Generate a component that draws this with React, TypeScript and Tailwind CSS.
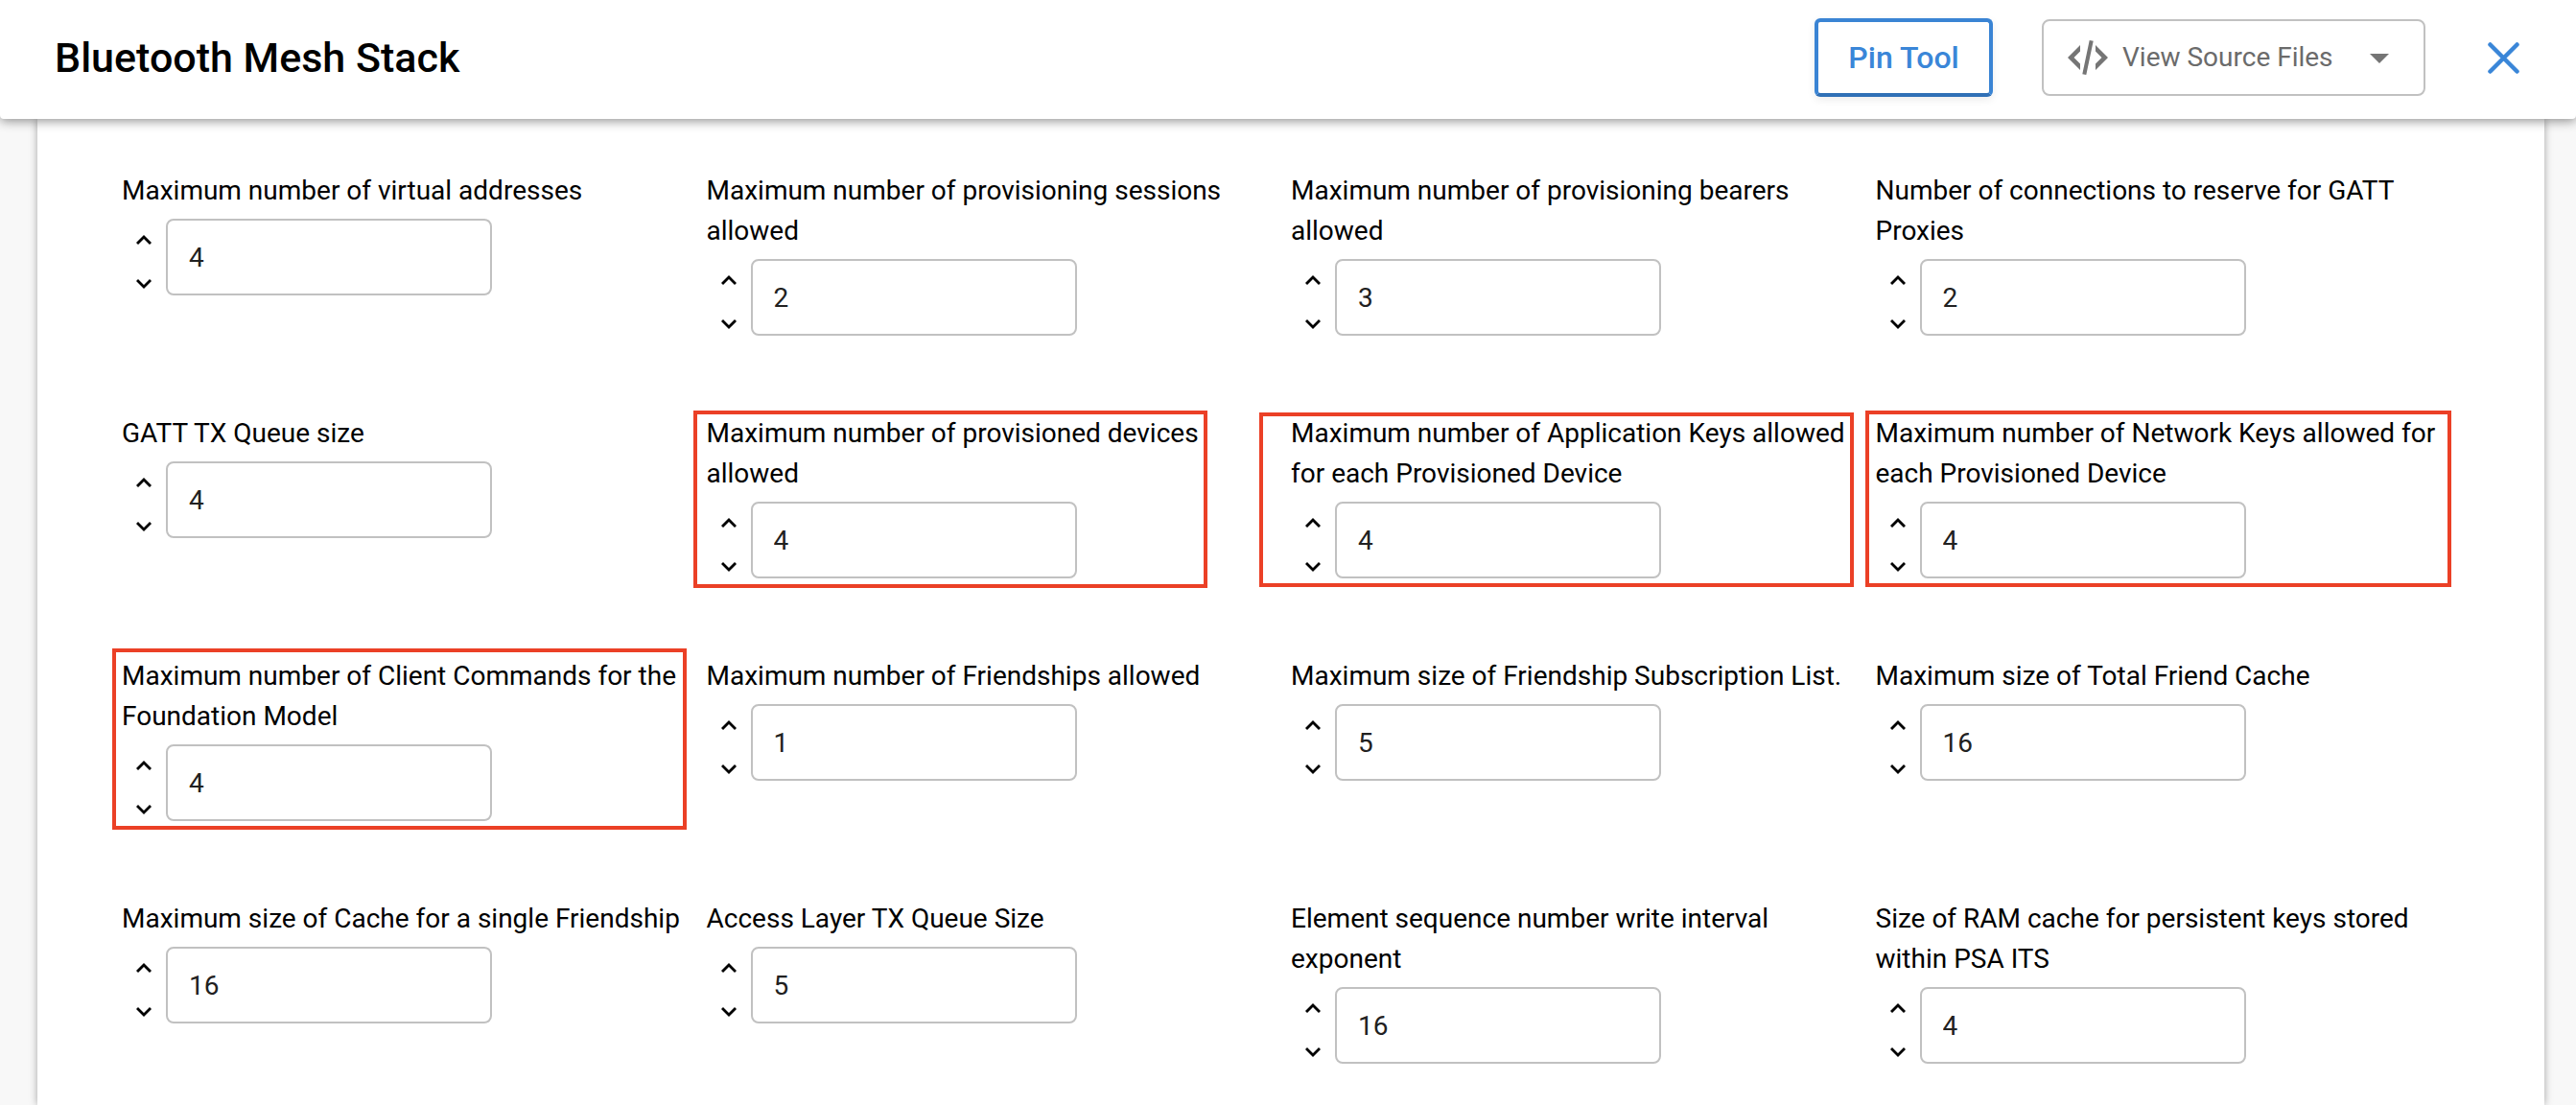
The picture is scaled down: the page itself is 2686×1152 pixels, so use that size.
import { useState } from "react";

type Field = { label: string; value: number; mark?: string };

const fields: Field[] = [
  { label: "Maximum number of virtual addresses", value: 4 },
  { label: "Maximum number of provisioning sessions allowed", value: 2 },
  { label: "Maximum number of provisioning bearers allowed", value: 3 },
  { label: "Number of connections to reserve for GATT Proxies", value: 2 },
  { label: "GATT TX Queue size", value: 4 },
  {
    label: "Maximum number of provisioned devices allowed",
    value: 4,
    mark: "-left-[14px] -top-[3px] -bottom-[10px] right-[87px]",
  },
  {
    label: "Maximum number of Application Keys allowed for each Provisioned Device",
    value: 4,
    mark: "-left-[33px] -top-[1px] -bottom-[9px] right-[23px]",
  },
  {
    label: "Maximum number of Network Keys allowed for each Provisioned Device",
    value: 4,
    mark: "-left-[11px] -top-[3px] -bottom-[9px] right-[9px]",
  },
  {
    label: "Maximum number of Client Commands for the Foundation Model",
    value: 4,
    mark: "-left-[10px] -top-[8px] -bottom-[9px] right-[21px]",
  },
  { label: "Maximum number of Friendships allowed", value: 1 },
  { label: "Maximum size of Friendship Subscription List.", value: 5 },
  { label: "Maximum size of Total Friend Cache", value: 16 },
  { label: "Maximum size of Cache for a single Friendship", value: 16 },
  { label: "Access Layer TX Queue Size", value: 5 },
  { label: "Element sequence number write interval exponent", value: 16 },
  { label: "Size of RAM cache for persistent keys stored within PSA ITS", value: 4 },
];

function Chevron({ down = false }: { down?: boolean }) {
  return (
    <svg viewBox="0 0 16 10" className="h-[10px] w-4" fill="currentColor" aria-hidden="true">
      <path d={down ? "M2 0 8 6 14 0 16 2 8 10 0 2Z" : "M2 10 8 4 14 10 16 8 8 0 0 8Z"} />
    </svg>
  );
}

function NumberField({ id, field }: { id: string; field: Field }) {
  const [value, setValue] = useState(String(field.value));
  const step = (by: number) => setValue(String(Number(value) + by));
  return (
    <div className="relative">
      <label htmlFor={id} className="block text-[28px] leading-[42px] text-black">
        {field.label}
      </label>
      <div className="mt-2 flex">
        <div className="flex w-[46px] flex-col items-center justify-between pt-[10px]">
          <button type="button" aria-label="Increase" onClick={() => step(1)} className="flex size-6 items-center justify-center">
            <Chevron />
          </button>
          <button type="button" aria-label="Decrease" onClick={() => step(-1)} className="flex size-6 items-center justify-center">
            <Chevron down />
          </button>
        </div>
        <input
          id={id}
          value={value}
          onChange={(e) => setValue(e.target.value)}
          className="h-20 w-[340px] rounded-lg border-2 border-[#c1c1c1] bg-white px-[22px] text-[28px] text-[#212121] outline-none"
        />
      </div>
      {field.mark && (
        <div className={`pointer-events-none absolute border-4 border-[#eb4026] ${field.mark}`} />
      )}
    </div>
  );
}

export default function App() {
  return (
    <div className="flex min-h-screen flex-col bg-[#f8f8f8] font-['Roboto',sans-serif]">
      <header className="relative z-10 flex h-[124px] items-center rounded-b-sm bg-white pr-[59px] pb-1 pl-[57px] shadow-[0_2px_12px_rgba(0,0,0,0.45)]">
        <h1 className="text-[43px] font-medium text-black">Bluetooth Mesh Stack</h1>
        <button
          type="button"
          className="ml-auto h-[82px] w-[186px] rounded-md border-4 border-[#3a84d4] border-b-[#3070b6] bg-white text-[32px] font-medium text-[#3a86d8] shadow-[0_3px_8px_rgba(0,0,0,0.08)]"
        >
          Pin Tool
        </button>
        <div className="relative ml-[51px]">
          <svg
            viewBox="0 0 42 36"
            className="pointer-events-none absolute top-[22px] left-[27px] h-9 w-[42px]"
            fill="#757575"
            aria-hidden="true"
          >
            <path d="M13 5V11.500L6.500 18 13 24.500V31L0 18ZM29 5V11.500L35.500 18 29 24.500V31L42 18ZM22.700 0 26.700 0.700 19.300 36 15.300 35.300Z" />
          </svg>
          <select
            aria-label="View Source Files"
            className="h-20 w-[400px] appearance-none rounded-lg border-2 border-[#c1c1c1] bg-white pl-[82px] text-[28px] text-[#6b6b6b] outline-none"
          >
            <option>View Source Files</option>
          </select>
          <svg viewBox="0 0 20 10" className="pointer-events-none absolute top-9 right-[38px] h-[10px] w-5" fill="#757575" aria-hidden="true">
            <path d="M0 0H20L10 10Z" />
          </svg>
        </div>
        <button type="button" aria-label="Close" className="ml-[65px]">
          <svg viewBox="0 0 33 33" className="size-[33px]" fill="none" stroke="#3a86d8" strokeWidth="4.500" strokeLinecap="round" aria-hidden="true">
            <path d="M2.500 2.500 30.500 30.500M30.500 2.500 2.500 30.500" />
          </svg>
        </button>
      </header>
      <main className="mr-[33px] ml-[39px] grow bg-white px-[88px] pt-[54px] pb-[43px] shadow-[0_0_8px_rgba(0,0,0,0.35)]">
        <div className="grid grid-cols-4 gap-y-[81px]">
          {fields.map((field, i) => (
            <NumberField key={field.label} id={`field-${i}`} field={field} />
          ))}
        </div>
      </main>
    </div>
  );
}
